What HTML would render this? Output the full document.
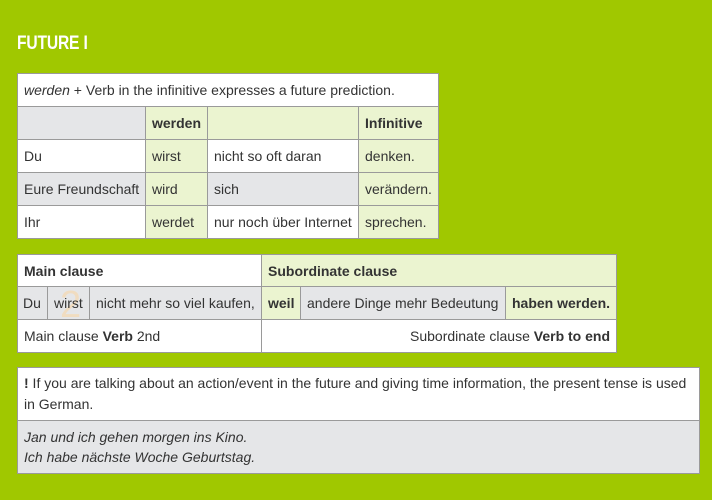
<!DOCTYPE html>
<html><head><meta charset="utf-8"><style>
*{margin:0;padding:0;box-sizing:border-box}
body{width:712px;height:500px;background:#a0c800;font-family:"Liberation Sans",Arial,sans-serif;font-size:14px;color:#333;position:relative;overflow:hidden}
.c{position:absolute;border:1px solid #9a9a9a;padding:0 6px;display:flex;align-items:center;white-space:nowrap;background:#fff}
.g{background:#ebf4d0}.x{background:#e5e6e8}
b{font-weight:bold}
h1{position:absolute;left:17px;top:32px;font-size:19.5px;color:#fff;font-weight:bold;transform:scaleX(.8);transform-origin:left;letter-spacing:-0.2px}
</style></head><body>
<h1>FUTURE I</h1>
<div class="c" style="left:17px;top:73px;width:422px;height:34px"><i>werden</i>&nbsp;+ Verb in the infinitive expresses a future prediction.</div>
<div class="c x" style="left:17px;top:106px;width:129px;height:34px"></div>
<div class="c g" style="left:145px;top:106px;width:63px;height:34px"><b>werden</b></div>
<div class="c g" style="left:207px;top:106px;width:152px;height:34px"></div>
<div class="c g" style="left:358px;top:106px;width:81px;height:34px"><b>Infinitive</b></div>
<div class="c" style="left:17px;top:139px;width:129px;height:34px">Du</div>
<div class="c g" style="left:145px;top:139px;width:63px;height:34px">wirst</div>
<div class="c" style="left:207px;top:139px;width:152px;height:34px">nicht so oft daran</div>
<div class="c g" style="left:358px;top:139px;width:81px;height:34px">denken.</div>
<div class="c x" style="left:17px;top:172px;width:129px;height:34px">Eure Freundschaft</div>
<div class="c g" style="left:145px;top:172px;width:63px;height:34px">wird</div>
<div class="c x" style="left:207px;top:172px;width:152px;height:34px">sich</div>
<div class="c g" style="left:358px;top:172px;width:81px;height:34px">verändern.</div>
<div class="c" style="left:17px;top:205px;width:129px;height:34px">Ihr</div>
<div class="c g" style="left:145px;top:205px;width:63px;height:34px">werdet</div>
<div class="c" style="left:207px;top:205px;width:152px;height:34px">nur noch über Internet</div>
<div class="c g" style="left:358px;top:205px;width:81px;height:34px">sprechen.</div>

<div class="c" style="left:17px;top:254px;width:245px;height:33px"><b>Main clause</b></div>
<div class="c g" style="left:261px;top:254px;width:356px;height:33px"><b>Subordinate clause</b></div>
<div class="c x" style="left:17px;top:286px;width:31px;height:34px;padding:0 5px">Du</div>
<div class="c x" style="left:47px;top:286px;width:43px;height:34px;padding:0 6px"><span style="position:absolute;left:12px;top:-3px;font-size:38px;color:#f6d9b0;opacity:.7">2</span><span style="position:relative">wirst</span></div>
<div class="c x" style="left:89px;top:286px;width:173px;height:34px">nicht mehr so viel kaufen,</div>
<div class="c g" style="left:261px;top:286px;width:40px;height:34px"><b>weil</b></div>
<div class="c x" style="left:300px;top:286px;width:206px;height:34px">andere Dinge mehr Bedeutung</div>
<div class="c g" style="left:505px;top:286px;width:112px;height:34px"><b>haben werden.</b></div>
<div class="c" style="left:17px;top:319px;width:245px;height:34px">Main clause&nbsp;<b>Verb</b>&nbsp;2nd</div>
<div class="c" style="left:261px;top:319px;width:356px;height:34px;justify-content:flex-end">Subordinate clause&nbsp;<b>Verb to end</b></div>

<div class="c" style="left:17px;top:367px;width:683px;height:54px;white-space:normal;line-height:21px;padding:0 6px"><span><b>!</b> If you are talking about an action/event in the future and giving time information, the present tense is used in German.</span></div>
<div class="c x" style="left:17px;top:420px;width:683px;height:54px;white-space:normal;line-height:20px"><i>Jan und ich gehen morgen ins Kino.<br>Ich habe nächste Woche Geburtstag.</i></div>
</body></html>
